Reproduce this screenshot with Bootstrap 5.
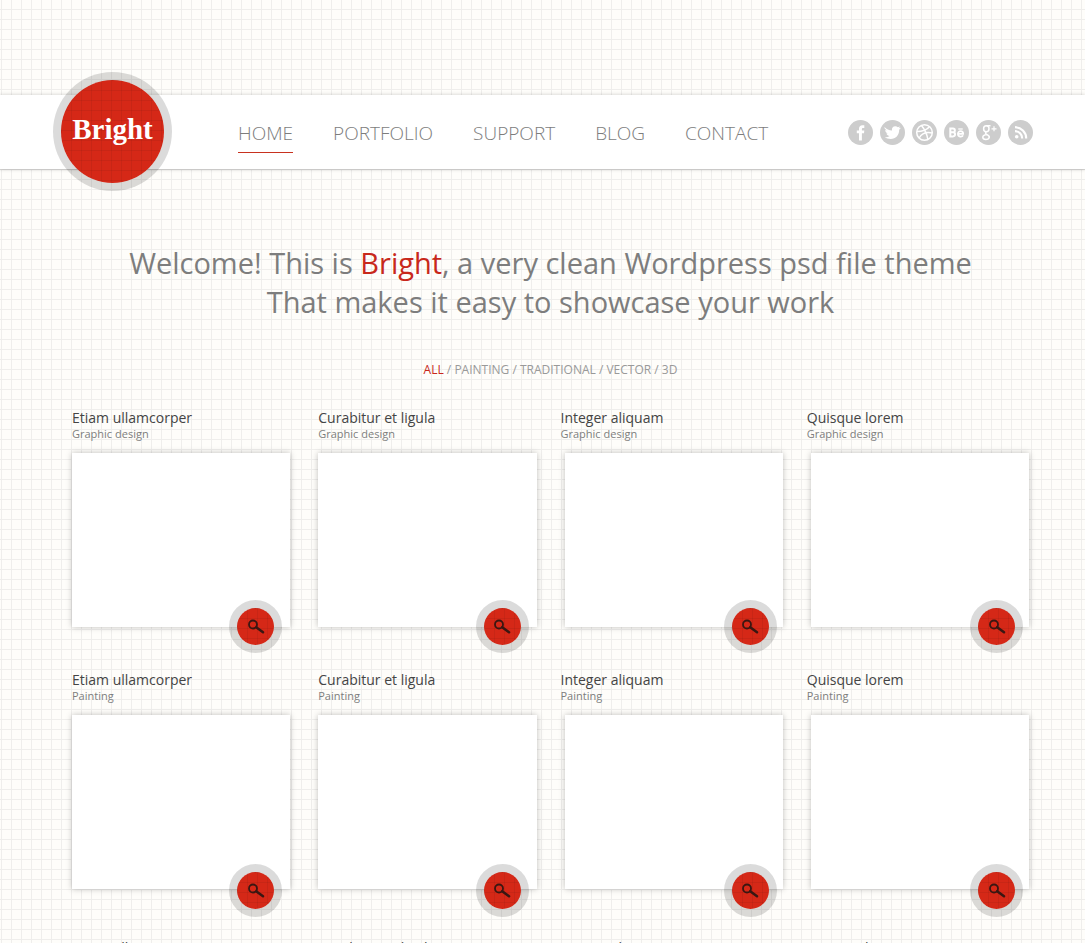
<!DOCTYPE html>
<html lang="en">
<head>
<meta charset="utf-8">
<meta name="viewport" content="width=device-width, initial-scale=1">
<title>Bright</title>
<link href="https://cdn.jsdelivr.net/npm/bootstrap@5.3.0/dist/css/bootstrap.min.css" rel="stylesheet">
<style>
  :root { --brand: #d52817; --ring: rgba(0,0,0,.14); }
  body {
    font-family: "Open Sans", "Noto Sans", sans-serif;
    color: #7d7d7d;
    background-color: #fefdfa;
    background-image: linear-gradient(to right, #efeeec 1px, transparent 1px), linear-gradient(to bottom, #efeeec 1px, transparent 1px);
    background-size: 10px 10px;
    background-position: 1px 9px;
  }
  a { color: inherit; text-decoration: none; }
  .site-header {
    margin-top: 95px; height: 74px; padding-left: 53px; padding-right: 52px;
    background: #fff;
    box-shadow: 0 0 4px rgba(0,0,0,.2), 0 1px 1px rgba(0,0,0,.08);
  }
  .disc {
    border-radius: 50%; border: 8px solid var(--ring); color: #fff;
    background-color: var(--brand);
    background-image: linear-gradient(to right, rgba(0,0,0,.06) 1px, transparent 1px), linear-gradient(to bottom, rgba(0,0,0,.06) 1px, transparent 1px);
    background-size: 10px 10px;
    background-clip: padding-box;
  }
  .logo {
    width: 119px; height: 119px; margin: -23px 0 -22px; padding-bottom: 4px;
    font: bold 29px/1 "Liberation Serif", serif;
  }
  .main-menu { margin-left: 66px; padding-top: 2px; gap: 40px; font-size: 19px; line-height: 24px; font-weight: 300; }
  .main-menu a { display: block; padding: 7px 0; border-bottom: 1px solid transparent; }
  .main-menu a.active { border-bottom-color: #c8321f; }
  .social { gap: 7px; }
  .social a, .social svg { display: block; width: 25px; height: 25px; }
  .page { padding-left: 72px; padding-right: 56px; }
  .welcome { margin: 74px 0 0; font-size: 29px; line-height: 39px; font-weight: 400; }
  .brand-text { color: #c8281b; }
  .filters { margin-top: 40px; font-size: 12px; line-height: 18px; color: #999; }
  .works { --bs-gutter-x: 28px; margin-top: 30px; }
  .works h2 { margin: 0; font-size: 14px; line-height: 18px; font-weight: 400; color: #444; }
  .works p { margin: 0; font-size: 11px; line-height: 14px; }
  .works > :nth-child(4n+3) .caption-text, .works > :nth-child(4n) .caption-text { margin-left: -4px; }
  .work { margin-bottom: 44px; }
  .work.last-line { margin-bottom: 50px; }
  .thumb { height: 174px; margin-top: 12px; background: #fff; box-shadow: 0 0 6px rgba(0,0,0,.25); }
  .zoom-btn { width: 53px; height: 53px; right: 8px; bottom: -26px; padding: 0; }
  .works > :nth-child(4n+3) .zoom-btn, .works > :nth-child(4n) .zoom-btn { right: 6px; }
  .last-line .zoom-btn { bottom: -28px; }
</style>
</head>
<body>
<header class="site-header d-flex align-items-center">
  <a href="#" class="logo disc d-flex align-items-center justify-content-center flex-shrink-0">Bright</a>
  <nav aria-label="Main">
    <ul class="main-menu list-unstyled d-flex mb-0">
      <li><a class="active" href="#">HOME</a></li>
      <li><a href="#">PORTFOLIO</a></li>
      <li><a href="#">SUPPORT</a></li>
      <li><a href="#">BLOG</a></li>
      <li><a href="#">CONTACT</a></li>
    </ul>
  </nav>
  <div class="social d-flex ms-auto">
    <a href="#" aria-label="Facebook"><svg viewBox="0 0 25 25"><circle cx="12.500" cy="12.500" r="12.500" fill="#cdcdcd"/><path fill="#fff" d="M11 20.500v-7.300H8.800v-2.700H11V8.700c0-2.300 1.300-3.500 3.300-3.500h2v2.700h-1.200c-.9 0-1.200.4-1.200 1.200v1.400h2.400l-.3 2.700h-2.100v7.300z"/></svg></a>
    <a href="#" aria-label="Twitter"><svg viewBox="0 0 25 25"><circle cx="12.500" cy="12.500" r="12.500" fill="#cdcdcd"/><path fill="#fff" d="M4.500 7c2 2.200 4.500 3.500 7.500 3.600C11.500 8 13 6.200 15.300 6.200c1 0 1.900.4 2.500 1l2.300-.8-1.300 1.900 2.200-.5-1.800 2c0 5.500-3.500 9.200-8.500 9.200-2.300 0-4.300-.6-5.900-1.700 2 .1 3.600-.4 4.900-1.400-1.600-.1-2.800-1-3.300-2.400h1.500c-1.700-.6-2.700-1.900-2.700-3.500l1.500.4C5.200 9.300 4.200 8.500 4.500 7z"/></svg></a>
    <a href="#" aria-label="Dribbble"><svg viewBox="0 0 25 25"><circle cx="12.500" cy="12.500" r="12.500" fill="#cdcdcd"/><g fill="none" stroke="#fff" stroke-width="1.500"><circle cx="12.500" cy="12.500" r="7.800"/><path d="M9.500 5.500c3.300 4 5.400 8.500 6.300 13.600M4.800 11.600c5.200 0 9.500-1 12.600-4.800M7.200 18c2.500-4.500 7-6.300 13-5"/></g></svg></a>
    <a href="#" aria-label="Behance"><svg viewBox="0 0 25 25"><circle cx="12.500" cy="12.500" r="12.500" fill="#cdcdcd"/><g fill="none" stroke="#fff" stroke-width="2"><path d="M6.300 8.600v7.800M5.300 8.600H9a1.800 1.800 0 0 1 0 3.700H6.300M9 12.300a2 2 0 0 1 0 4.100H5.300"/><path d="M14 13.800h5.200c0-3.600-5.300-3.600-5.300 0 0 3.500 4.200 3.400 5.200 1.600" stroke-width="1.700"/><path d="M14.300 9h4.400" stroke-width="1.300"/></g></svg></a>
    <a href="#" aria-label="Google Plus"><svg viewBox="0 0 25 25"><circle cx="12.500" cy="12.500" r="12.500" fill="#cdcdcd"/><g fill="none" stroke="#fff" stroke-width="1.500"><ellipse cx="10.300" cy="8.800" rx="2.700" ry="3"/><path d="M14.500 5.700h-4M10.500 11.900c-1.800 1-.9 1.900.6 2.700 4.200 2.200 1.600 4.800-1.200 4.800-3.800 0-4.700-4 .8-4.800"/><path d="M18 6.300v5M15.500 8.800h5" stroke-width="1.200"/></g></svg></a>
    <a href="#" aria-label="RSS"><svg viewBox="0 0 25 25"><circle cx="12.500" cy="12.500" r="12.500" fill="#cdcdcd"/><circle cx="8.700" cy="16.700" r="1.800" fill="#fff"/><path fill="none" stroke="#fff" stroke-width="2.200" d="M7 11.200a7.200 7.200 0 0 1 7.200 7.200M7 7.200a11.200 11.200 0 0 1 11.200 11.200"/></svg></a>
  </div>
</header>

<main class="page container-fluid">
  <h1 class="welcome text-center">Welcome! This is <span class="brand-text">Bright</span>, a very clean Wordpress psd file theme<br>That makes it easy to showcase your work</h1>
  <nav class="filters text-center" aria-label="Filter"><a class="brand-text" href="#">ALL</a> / <a href="#">PAINTING</a> / <a href="#">TRADITIONAL</a> / <a href="#">VECTOR</a> / <a href="#">3D</a></nav>
  <section class="works row row-cols-4" id="works"></section>
</main>

<script>
  const titles = ['Etiam ullamcorper', 'Curabitur et ligula', 'Integer aliquam', 'Quisque lorem'];
  const button = `<button type="button" class="zoom-btn disc position-absolute" aria-label="View">
    <svg class="d-block m-auto" width="18" height="16" viewBox="0 0 18 16"><g fill="none" stroke="#3a1712"><circle cx="6" cy="5.500" r="4" stroke-width="1.800"/><path d="M9.200 8.300 16 13.200" stroke-width="2.600" stroke-linecap="round"/></g></svg></button>`;
  const card = (title, kind, cls) => `<div><article class="work ${cls}"><div class="caption-text"><h2>${title}</h2><p>${kind}</p></div><div class="thumb position-relative">${button}</div></article></div>`;
  document.getElementById('works').innerHTML =
    titles.map(t => card(t, 'Graphic design', '')).join('') +
    titles.map(t => card(t, 'Painting', 'last-line')).join('') +
    titles.map(t => `<div><div class="caption-text"><h2>${t}</h2></div></div>`).join('');
</script>
<script src="https://cdn.jsdelivr.net/npm/bootstrap@5.3.0/dist/js/bootstrap.bundle.min.js"></script>
</body>
</html>
